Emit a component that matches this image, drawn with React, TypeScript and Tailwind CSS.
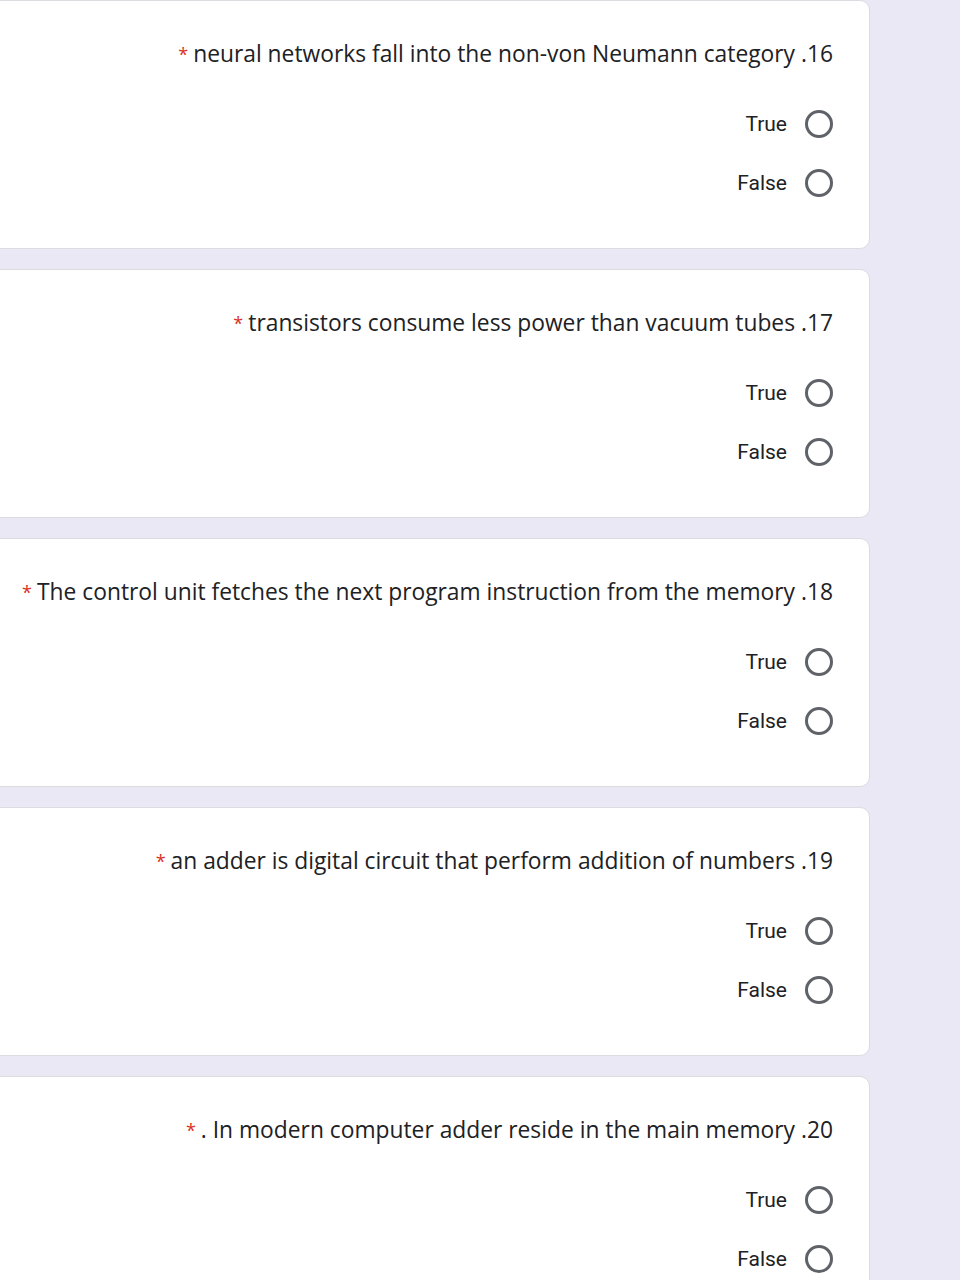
import React from "react";

const questions = [
  "neural networks fall into the non-von Neumann category .16",
  "transistors consume less power than vacuum tubes .17",
  "The control unit fetches the next program instruction from the memory .18",
  "an adder is digital circuit that perform addition of numbers .19",
  ". In modern computer adder reside in the main memory .20",
];

function Radio({ label }: { label: string }) {
  return (
    <div className="flex items-center justify-end h-[40px] gap-[18px]">
      <span className="text-[21px] text-[#202124] pt-[2px]" style={{ fontFamily: "Roboto, sans-serif" }}>
        {label}
      </span>
      <span className="w-[28px] h-[28px] rounded-full border-[3px] border-[#5f6368] box-border" />
    </div>
  );
}

export default function App() {
  return (
    <div className="w-[960px] h-[1280px] overflow-hidden bg-[#ebe8f5] flex flex-col gap-[20px]">
      {questions.map((q) => (
        <div
          key={q}
          className="shrink-0 ml-[-20px] w-[890px] h-[249px] bg-white rounded-[10px] border border-[#dadce0] box-border pt-[38px] pr-[36px] flex flex-col"
        >
          <div
            className="text-right text-[22.8px] leading-[30px] text-[#202124]"
            style={{ fontFamily: "'Open Sans', sans-serif" }}
          >
            <span className="text-[#d93025] text-[18px] align-top mr-[5px]">*</span>
            {q}
          </div>
          <div className="mt-[35px] flex flex-col gap-[19px]">
            <Radio label="True" />
            <Radio label="False" />
          </div>
        </div>
      ))}
    </div>
  );
}
